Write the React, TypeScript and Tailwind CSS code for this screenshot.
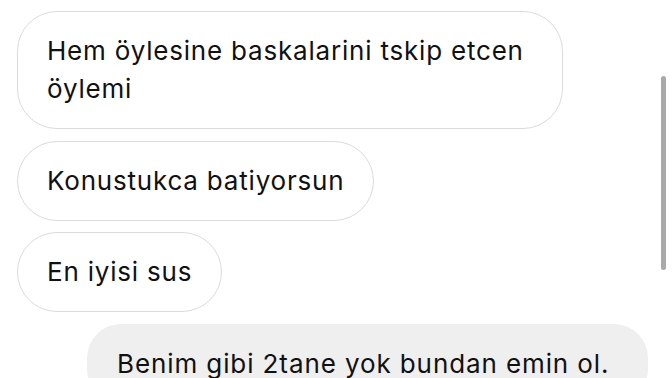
import React from "react";

type Message = { id: number; text: string; mine?: boolean };

const messages: Message[] = [
    { id: 1, text: "Hem öylesine baskalarini tskip etcen öylemi" },
    { id: 2, text: "Konustukca batiyorsun" },
    { id: 3, text: "En iyisi sus" },
    { id: 4, text: "Benim gibi 2tane yok bundan emin ol.", mine: true },
];

export default function App() {
    const renderBubble = (msg: Message) =>
        msg.mine ? (
            <div key={msg.id} className="flex justify-end pr-[24px]">
                <div className="w-[561px] rounded-[34px] bg-[#efefef] pl-[30px] pr-[30px] pt-[21px] pb-[20px]">
                    <p className="leading-[38px] whitespace-nowrap tracking-[0.9px]">{msg.text}</p>
                </div>
            </div>
        ) : (
            <div key={msg.id} className="flex">
                <div className="max-w-[546px] rounded-[40px] border border-[#dbdbdb] bg-white pl-[29px] pr-[29px] py-[20px]">
                    <p className="leading-[38px]">{msg.text}</p>
                </div>
            </div>
        );

    return (
        <div
            className="relative h-[378px] w-[672px] overflow-hidden bg-white text-[26px] tracking-[0.8px] text-[#111]"
            style={{ fontFamily: "Inter, 'Liberation Sans', sans-serif" }}
        >
            <div className="flex flex-col gap-[11.5px] pl-[17px] pt-[11px]">
                {messages.map(renderBubble)}
            </div>
            {/* scroll indicator */}
            <div className="absolute left-[661px] top-[76px] h-[194px] w-[5px] rounded-full bg-[#a9a9a9]" />
        </div>
    );
}
